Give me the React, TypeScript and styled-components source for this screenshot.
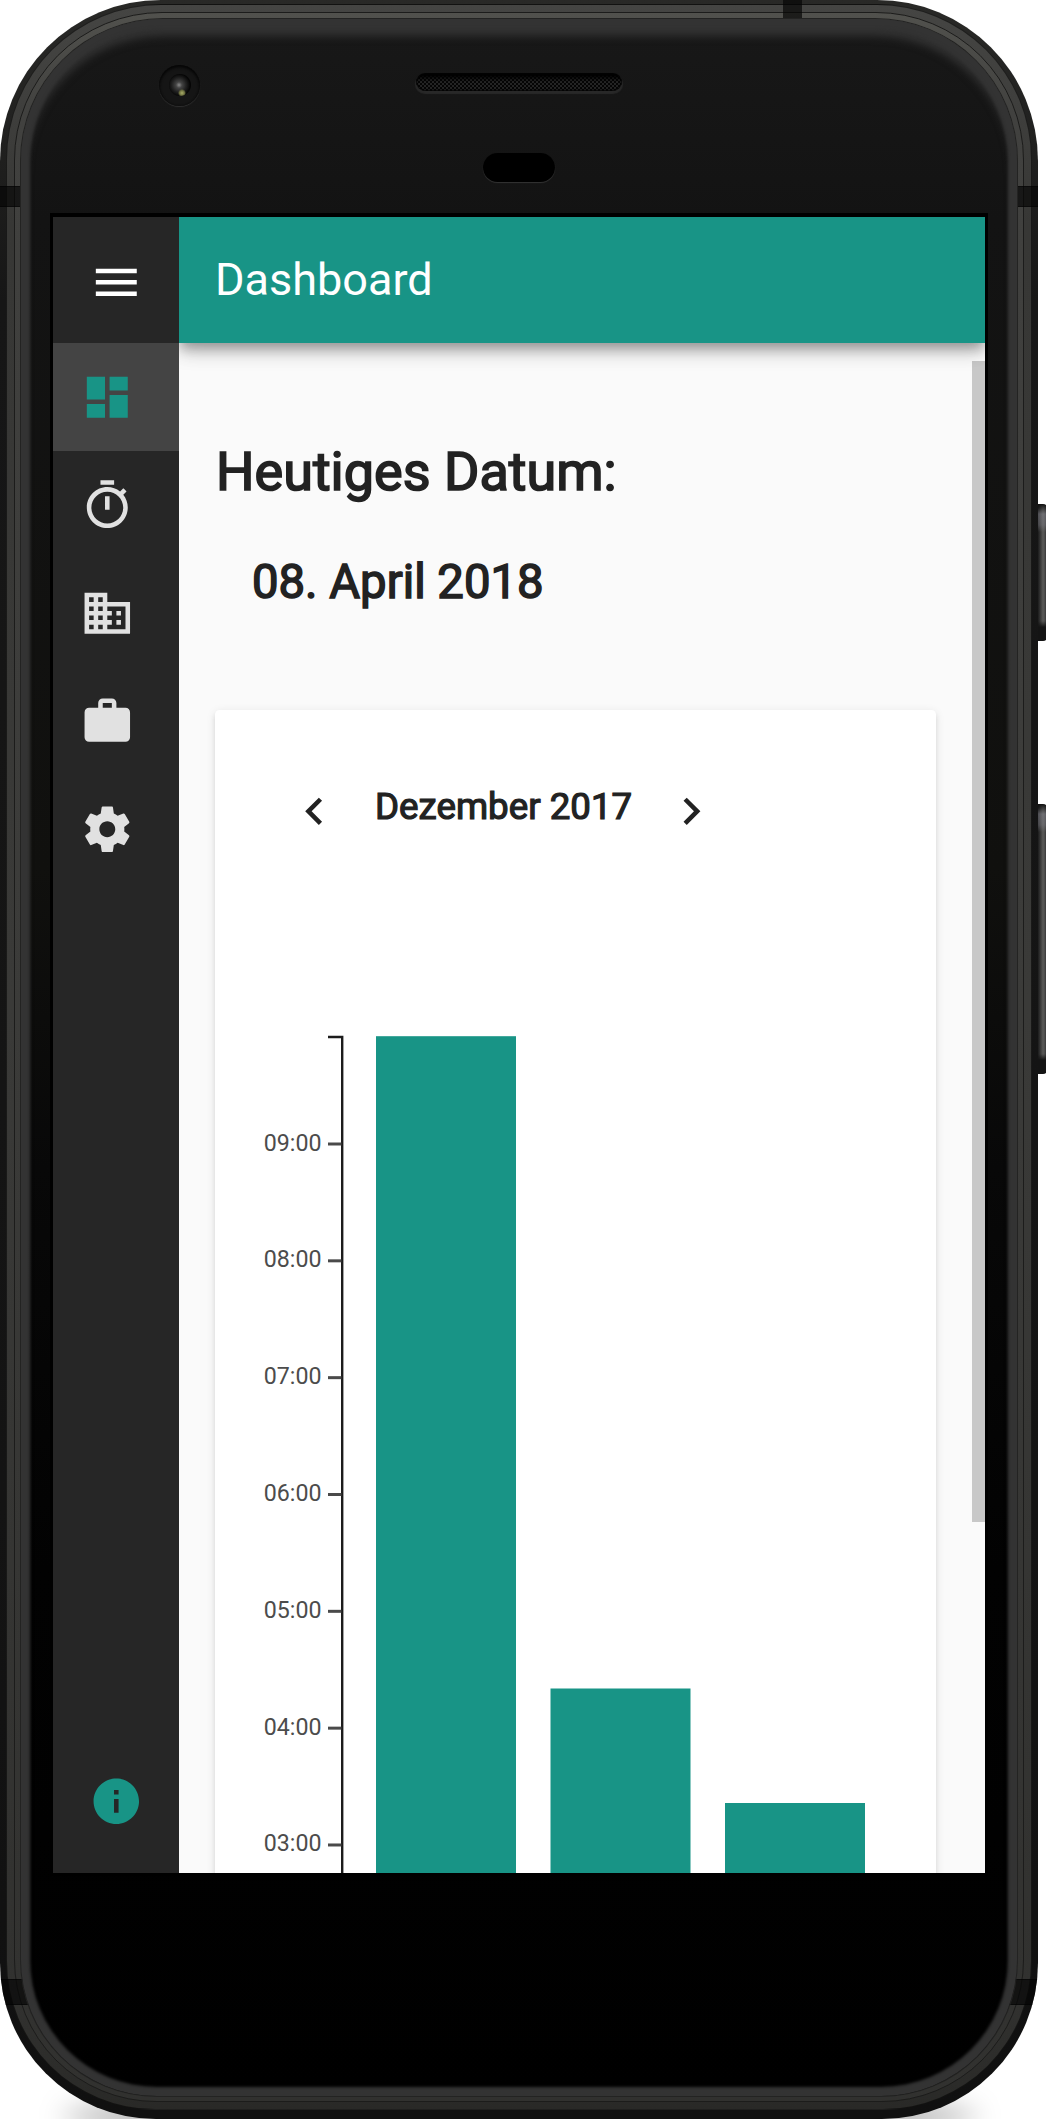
import React from "react";
import styled, { createGlobalStyle } from "styled-components";

const TEAL = "#189486";

const GlobalStyle = createGlobalStyle`
  * { box-sizing: border-box; }
  html, body { margin: 0; background: #fff; }
  body { font-family: Roboto, "Liberation Sans", sans-serif; color: #222; }
  h1, h2, h3 { margin: 0; font-weight: 400; }
`;

/* ---------- device ---------- */

const Page = styled.div`
  position: relative;
  width: 1046px;
  height: 2119px;
  overflow: hidden;
`;

const GroundShadow = styled.div`
  position: absolute;
  left: 62px;
  right: 68px;
  top: 2102px;
  height: 30px;
  border-radius: 50%;
  background: rgba(0, 0, 0, 0.5);
  filter: blur(14px);
`;

const Rim = styled.div`
  position: relative;
  width: 1038px;
  height: 2119px;
  padding: 5px 7px 8px;
  border-radius: 161px 161px 156px 156px;
  background: linear-gradient(#292927 0, #161616 300px, #131313 1500px, #101010);
  overflow: hidden;
`;

const MetalOuter = styled.div`
  height: 100%;
  padding: 7px 7px 7px;
  border: 1px solid rgba(0, 0, 0, 0.55);
  border-radius: 155px 155px 149px 149px;
  background: linear-gradient(#454543 0, #373735 220px, #3a3a38 1000px, #31312f 2000px, #292927);
  margin: -1px;
`;

const MetalInner = styled.div`
  height: 100%;
  padding: 6px 6px 5px;
  border: 1px solid #1c1c1b;
  border-radius: 148px 148px 142px 142px;
  background: linear-gradient(#51514d 0, #41413f 100px, #3b3b39 1000px, #31312f);
`;

const Glass = styled.div`
  position: relative;
  z-index: 2;
  display: flex;
  flex-direction: column;
  align-items: center;
  height: 100%;
  border-radius: 142px 142px 136px 136px;
  background: linear-gradient(#181818 0, #131313 200px, #10100e 850px, #080808 1150px, #020202 1550px, #000);
  box-shadow:
    0 0 0 1px #232322,
    inset 0 0 3px 9px #333,
    inset 0 13px 9px 4px #333;
`;

const Band = styled.i<{ $x: number; $y: number; $w: number; $h: number }>`
  position: absolute;
  left: ${(p) => p.$x}px;
  top: ${(p) => p.$y}px;
  width: ${(p) => p.$w}px;
  height: ${(p) => p.$h}px;
  background: rgba(5, 5, 5, 0.68);
  border: solid rgba(0, 0, 0, 0.45);
  border-width: 1px 0;
`;

const SideButton = styled.i<{ $y: number; $h: number }>`
  position: absolute;
  left: 1038px;
  top: ${(p) => p.$y}px;
  width: 9px;
  height: ${(p) => p.$h}px;
  border-radius: 0 4px 4px 0;
  background:
    linear-gradient(#111 0, rgba(17, 17, 17, 0.4) 4px, rgba(140, 140, 150, 0.45) 10px, rgba(140, 140, 150, 0.35) 21px, transparent 28px,
      transparent calc(100% - 20px), #141414 calc(100% - 14px)),
    linear-gradient(90deg, #1c1c1c 0, #333 2px, #5a5a58 5px, #4a4a4a 7px, #222 9px);
`;

const Bezel = styled.div`
  display: grid;
  grid-template-columns: 1fr 208px 1fr;
  width: 100%;
  height: 194px;
  flex: none;
`;

const Camera = styled.div`
  display: flex;
  align-items: center;
  justify-content: center;
  width: 41px;
  height: 41px;
  margin: 46px 0 0 138px;
  border-radius: 50%;
  background: #151515;
  box-shadow: inset 0 2px 3px #050505, inset 0 0 2px #080808, 0 1px 1px #303030;
`;

const Lens = styled.div`
  width: 22px;
  height: 22px;
  margin-top: -2px;
  border-radius: 50%;
  background:
    radial-gradient(circle at 13px 19px, #a9ad68 0, #6e7140 2.5px, transparent 4px),
    radial-gradient(circle at 10px 11px, #8a8a8a 0, #444 3px, #222 7px, #050505 11px);
`;

const SensorStack = styled.div`
  display: flex;
  flex-direction: column;
  align-items: center;
`;

const Speaker = styled.div`
  width: 206px;
  height: 18px;
  margin-top: 54px;
  border-radius: 9px;
  background:
    linear-gradient(#000 2px, transparent 9px),
    repeating-conic-gradient(#050505 0 25%, #242424 0 50%) 0 0 / 4px 4px;
  box-shadow: inset 0 0 2px 1px #040404, 0 2px 1px 1px #282828;
`;

const Sensor = styled.div`
  width: 72px;
  height: 29px;
  margin-top: 62px;
  border-radius: 15px;
  background: #000;
  box-shadow: 0 1px 1px #333;
`;

/* ---------- application ---------- */

const Screen = styled.div`
  display: flex;
  flex: none;
  box-sizing: content-box;
  width: 932px;
  height: 1656px;
  border: 3px solid #000;
  border-top-width: 4px;
  background: #fafafa;
`;

const Sidebar = styled.nav`
  display: flex;
  flex-direction: column;
  flex: none;
  width: 126px;
  background: #262626;
`;

const MenuButton = styled.div`
  display: flex;
  align-items: center;
  justify-content: center;
  height: 126px;
  flex: none;
  padding-top: 4px;
  color: #fff;
`;

const NavItem = styled.div<{ $active?: boolean }>`
  display: flex;
  align-items: center;
  height: 108px;
  flex: none;
  padding-left: 27px;
  background: ${(p) => (p.$active ? "#444" : "transparent")};
  color: ${(p) => (p.$active ? TEAL : "#e1e1e1")};
`;

const InfoButton = styled.div`
  display: flex;
  justify-content: center;
  margin-top: auto;
  padding-bottom: 44px;
  color: ${TEAL};
`;

const Glyph = styled.svg`
  display: block;
  width: 54.6px;
  height: 54.6px;
  flex: none;
  fill: currentColor;
`;

const Main = styled.main`
  position: relative;
  display: flex;
  flex-direction: column;
  flex: 1;
  min-width: 0;
  overflow: hidden;
`;

const Toolbar = styled.header`
  position: relative;
  z-index: 1;
  display: flex;
  align-items: center;
  height: 126px;
  flex: none;
  padding: 0 36px 0 36px;
  background: ${TEAL};
  color: #fff;
  font-size: 45px;
  line-height: 52px;
  box-shadow:
    0 7px 11px -2px rgba(0, 0, 0, 0.24),
    0 9px 18px 0 rgba(0, 0, 0, 0.17),
    0 2px 24px 0 rgba(0, 0, 0, 0.12);
`;

const Content = styled.div`
  display: flex;
  flex-direction: column;
  padding: 97px 49.5px 0 36px;
`;

const Heading = styled.h1`
  padding-left: 1px;
  font-size: 54px;
  line-height: 64px;
  -webkit-text-stroke: 1.7px #222;
`;

const DateLine = styled.h2`
  margin-top: 50px;
  padding-left: 37px;
  font-size: 47.25px;
  line-height: 56px;
  -webkit-text-stroke: 1.5px #222;
`;

const Card = styled.section`
  margin-top: 100px;
  height: 1400px;
  flex: none;
  border-radius: 4.5px;
  background: #fff;
  box-shadow:
    0 7px 2px -5px rgba(0, 0, 0, 0.1),
    0 4px 5px 0 rgba(0, 0, 0, 0.08),
    0 2px 10px 0 rgba(0, 0, 0, 0.1);
`;

const MonthPicker = styled.div`
  display: flex;
  align-items: center;
  padding: 74px 0 0 71.5px;
  height: 128px;
`;

const Month = styled.h3`
  width: 323px;
  margin-top: -9px;
  padding-left: 2px;
  text-align: center;
  font-size: 36.7px;
  line-height: 44px;
  -webkit-text-stroke: 1.2px #222;
`;

const Chart = styled.svg`
  display: block;
  width: 721px;
  height: 1200px;
`;

const TickLabel = styled.text`
  font-family: Roboto, "Liberation Sans", sans-serif;
  font-size: 23.2px;
  fill: #4c4c4c;
`;

const Scrollbar = styled.div`
  position: absolute;
  right: 0;
  top: 143.5px;
  width: 13.5px;
  height: 1161px;
  background: #c8c8c8;
`;

const PATHS = {
  menu: "M3 18h18v-2H3v2zm0-5h18v-2H3v2zm0-7v2h18V6H3z",
  dashboard: "M3 13h8V3H3v10zm0 8h8v-6H3v6zm10 0h8V11h-8v10zm0-18v6h8V3h-8z",
  timer:
    "M15 1H9v2h6V1zm-4 13h2V8h-2v6zm8.03-6.61l1.42-1.42c-.43-.51-.9-.99-1.41-1.41l-1.42 1.42C16.07 4.74 14.12 4 12 4c-4.97 0-9 4.03-9 9s4.02 9 9 9 9-4.03 9-9c0-2.12-.74-4.07-1.97-5.61zM12 20c-3.87 0-7-3.13-7-7s3.13-7 7-7 7 3.13 7 7-3.13 7-7 7z",
  domain:
    "M12 7V3H2v18h20V7H12zM6 19H4v-2h2v2zm0-4H4v-2h2v2zm0-4H4V9h2v2zm0-4H4V5h2v2zm4 12H8v-2h2v2zm0-4H8v-2h2v2zm0-4H8V9h2v2zm0-4H8V5h2v2zm10 12h-8v-2h2v-2h-2v-2h2v-2h-2V9h8v10zm-2-8h-2v2h2v-2zm0 4h-2v2h2v-2z",
  work:
    "M20 6h-4V4c0-1.11-.89-2-2-2h-4c-1.11 0-2 .89-2 2v2H4c-1.11 0-1.99.89-1.99 2L2 19c0 1.11.89 2 2 2h16c1.11 0 2-.89 2-2V8c0-1.11-.89-2-2-2zm-6 0h-4V4h4v2z",
  settings:
    "M19.43 12.98c.04-.32.07-.64.07-.98s-.03-.66-.07-.98l2.11-1.65c.19-.15.24-.42.12-.64l-2-3.46c-.12-.22-.39-.3-.61-.22l-2.49 1c-.52-.4-1.08-.73-1.69-.98l-.38-2.65C14.46 2.18 14.25 2 14 2h-4c-.25 0-.46.18-.49.42l-.38 2.65c-.61.25-1.17.59-1.69.98l-2.49-1c-.23-.09-.49 0-.61.22l-2 3.46c-.13.22-.07.49.12.64l2.11 1.65c-.04.32-.07.65-.07.98s.03.66.07.98l-2.11 1.65c-.19.15-.24.42-.12.64l2 3.46c.12.22.39.3.61.22l2.49-1c.52.4 1.08.73 1.69.98l.38 2.65c.03.24.24.42.49.42h4c.25 0 .46-.18.49-.42l.38-2.65c.61-.25 1.17-.59 1.69-.98l2.49 1c.23.09.49 0 .61-.22l2-3.46c.12-.22.07-.49-.12-.64l-2.11-1.65zM12 15.5c-1.93 0-3.5-1.57-3.5-3.5s1.57-3.5 3.5-3.5 3.5 1.57 3.5 3.5-1.57 3.5-3.5 3.5z",
  info: "M12 2C6.48 2 2 6.48 2 12s4.48 10 10 10 10-4.48 10-10S17.52 2 12 2zm1 15h-2v-6h2v6zm0-8h-2V7h2v2z",
  prev: "M15.41 7.41L14 6l-6 6 6 6 1.41-1.41L10.83 12z",
  next: "M10 6L8.59 7.41 13.17 12l-4.58 4.59L10 18l6-6z",
};

const Icon = ({ name }: { name: keyof typeof PATHS }) => (
  <Glyph viewBox="0 0 24 24">
    <path d={PATHS[name]} />
  </Glyph>
);

const NAV: (keyof typeof PATHS)[] = ["dashboard", "timer", "domain", "work", "settings"];
const HOURS = ["09:00", "08:00", "07:00", "06:00", "05:00", "04:00", "03:00"];
const BARS = [
  { x: 161, top: 198.2 },
  { x: 335.5, top: 850.5 },
  { x: 510, top: 965 },
];

const HoursChart = () => (
  <Chart viewBox="0 0 721 1200">
    {BARS.map((b) => (
      <rect key={b.x} x={b.x} y={b.top} width={140} height={1300 - b.top} fill={TEAL} />
    ))}
    <path d="M113 199H127.2V1300" fill="none" stroke="#1c1c1c" strokeWidth={2.4} />
    {HOURS.map((label, i) => {
      const y = 306 + i * 116.83;
      return (
        <g key={label}>
          <path d={`M113 ${y}H126.4`} stroke="#4a4a4a" strokeWidth={3} />
          <TickLabel x={106.5} y={y + 6.5} textAnchor="end">
            {label}
          </TickLabel>
        </g>
      );
    })}
  </Chart>
);

export default function App() {
  return (
    <>
      <GlobalStyle />
      <Page>
        <GroundShadow />
        <SideButton $y={504} $h={137} />
        <SideButton $y={804} $h={270} />
        <Rim>
          <MetalOuter>
            <MetalInner>
              <Glass>
                <Bezel>
                  <Camera>
                    <Lens />
                  </Camera>
                  <SensorStack>
                    <Speaker />
                    <Sensor />
                  </SensorStack>
                </Bezel>
                <Screen>
                  <Sidebar>
                    <MenuButton>
                      <Icon name="menu" />
                    </MenuButton>
                    {NAV.map((name) => (
                      <NavItem key={name} $active={name === "dashboard"}>
                        <Icon name={name} />
                      </NavItem>
                    ))}
                    <InfoButton>
                      <Icon name="info" />
                    </InfoButton>
                  </Sidebar>
                  <Main>
                    <Toolbar>Dashboard</Toolbar>
                    <Content>
                      <Heading>Heutiges Datum:</Heading>
                      <DateLine>08. April 2018</DateLine>
                      <Card>
                        <MonthPicker>
                          <Icon name="prev" />
                          <Month>Dezember 2017</Month>
                          <Icon name="next" />
                        </MonthPicker>
                        <HoursChart />
                      </Card>
                    </Content>
                    <Scrollbar />
                  </Main>
                </Screen>
              </Glass>
            </MetalInner>
          </MetalOuter>
          <Band $x={783} $y={-1} $w={19} $h={21} />
          <Band $x={0} $y={186} $w={21} $h={21} />
          <Band $x={1017} $y={186} $w={21} $h={21} />
          <Band $x={0} $y={1979} $w={30} $h={26} />
          <Band $x={1008} $y={1979} $w={30} $h={26} />
        </Rim>
      </Page>
    </>
  );
}
